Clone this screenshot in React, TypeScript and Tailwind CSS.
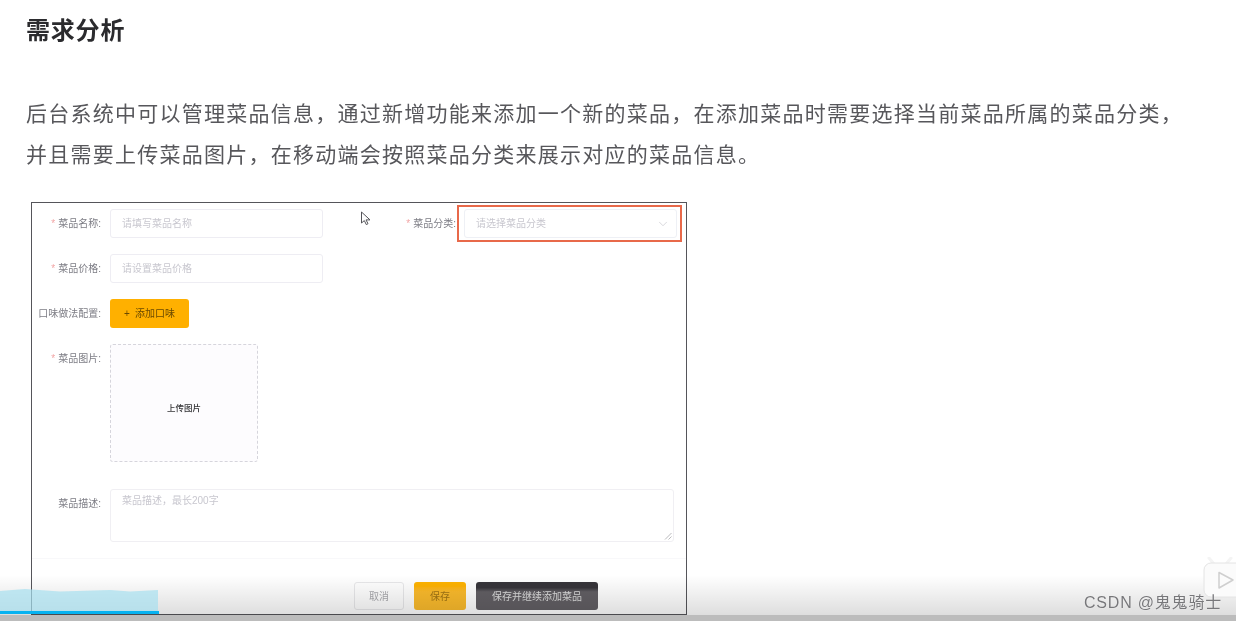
import { ChevronDown } from 'lucide-react';

const cjk = 'font-["Liberation_Sans","Noto_Sans_CJK_SC",sans-serif]';

function Label({ text, required = true, width = 'w-[69px]' }: { text: string; required?: boolean; width?: string }) {
  return (
    <div className={`${width} h-[29px] shrink-0 pt-[1px] text-right text-[10px] leading-[28px] text-[#7d7d85]`}>
      {required && <span className="mr-[3px] text-[#f2a6a6]">*</span>}
      {text}:
    </div>
  );
}

function TextInput({ placeholder }: { placeholder: string }) {
  return (
    <div className="flex h-[29px] w-[213px] items-center rounded-[3px] border border-[#eeedf3] px-[11px] text-[10px] text-[#c8c7cf]">
      {placeholder}
    </div>
  );
}

export default function App() {
  return (
    <div className={`${cjk} relative h-[621px] w-[1236px] overflow-hidden bg-white blur-[0.4px]`}>
      <div className="px-[26px] pt-[16px]">
        <h1 className="text-[24px] font-bold leading-[30px] tracking-[0.8px] text-[#2b2b2e]">需求分析</h1>
        <div className="mt-[47px] text-[21px] leading-[41px] tracking-[1.25px] text-[#57575b]">
          <p>后台系统中可以管理菜品信息，通过新增功能来添加一个新的菜品，在添加菜品时需要选择当前菜品所属的菜品分类，</p>
          <p>并且需要上传菜品图片，在移动端会按照菜品分类来展示对应的菜品信息。</p>
        </div>

        {/* form screenshot */}
        <div className="ml-[5px] mt-[27px] flex h-[413px] w-[656px] flex-col border border-[#55555a]">
          <div className="mt-[6px] flex gap-[9px]">
            <Label text="菜品名称" />
            <TextInput placeholder="请填写菜品名称" />
            <div className="ml-[58px] flex gap-[8px]">
              <Label text="菜品分类" width="w-[66px]" />
              <div className="flex h-[29px] w-[213px] items-center justify-between rounded-[3px] border border-[#eef0f5] pl-[11px] pr-[6px] text-[10px] text-[#c8c7cf]">
                请选择菜品分类
                <ChevronDown size={14} strokeWidth={1.2} className="text-[#c8c8ce]" />
              </div>
            </div>
          </div>

          <div className="mt-[16px] flex gap-[9px]">
            <Label text="菜品价格" />
            <TextInput placeholder="请设置菜品价格" />
          </div>

          <div className="mt-[16px] flex gap-[9px]">
            <Label text="口味做法配置" required={false} />
            <div className="flex h-[29px] w-[79px] items-center justify-center rounded-[3px] bg-[#ffb000] text-[10px] text-[#6b4a00]">
              <span className="mr-[5px]">+</span>添加口味
            </div>
          </div>

          <div className="mt-[16px] flex gap-[9px]">
            <Label text="菜品图片" />
            <div className="flex h-[118px] w-[148px] items-center justify-center rounded-[3px] border border-dashed border-[#d6d5dc] bg-[#fdfcfe] pt-[10px] text-[8.5px] font-medium text-[#333336]">
              上传图片
            </div>
          </div>

          <div className="mt-[27px] flex gap-[9px]">
            <Label text="菜品描述" required={false} />
            <div className="relative h-[53px] w-[564px] rounded-[3px] border border-[#f0eff3] px-[11px] pt-[1px] text-[10px] leading-[20px] text-[#c8c7cf]">
              菜品描述，最长200字
              <svg viewBox="0 0 8 8" className="absolute bottom-[1px] right-[1px] h-[8px] w-[8px] text-[#a8a8ac]" fill="none" stroke="currentColor" strokeWidth="0.8">
                <path d="M1 7.5 7.5 1M4.5 7.5 7.5 4.5" />
              </svg>
            </div>
          </div>

          <div className="mt-[16px] h-px w-full bg-[#f8f8fa]" />

          <div className="ml-[322px] mt-[23px] flex gap-[10px]">
            <div className="flex h-[28px] w-[50px] items-center justify-center rounded-[3px] border border-[#e8e8ea] text-[10px] text-[#a9a9ad]">取消</div>
            <div className="flex h-[28px] w-[52px] items-center justify-center rounded-[3px] bg-gradient-to-b from-[#ffb300] from-15% to-[#fbbb2c] to-35% text-[10px] text-[#a07414]">保存</div>
            <div className="flex h-[28px] w-[122px] items-center justify-center rounded-[3px] bg-gradient-to-b from-[#37353a] from-20% to-[#625f64] to-35% text-[10px] text-[#dcdcdc]">保存并继续添加菜品</div>
          </div>
        </div>
      </div>

      {/* highlight box round the category select */}
      <div className="absolute left-[457px] top-[205px] h-[37px] w-[225px] border-2 border-[#e8694a]" />

      {/* mouse cursor */}
      <svg viewBox="0 0 12 16" className="absolute left-[360px] top-[211px] h-[16px] w-[12px]" fill="#fff" stroke="#55555a" strokeWidth="1">
        <path d="M1.5 1v11l2.8-2.4 2 4 1.7-.9-2-3.8H10z" />
      </svg>

      {/* video player fade at the bottom */}
      <div className="absolute inset-x-0 bottom-0 h-[46px] bg-gradient-to-b from-transparent to-black/15" />
      <div className="absolute inset-x-0 bottom-0 h-[6px] bg-[#bcbcbc]" />

      {/* buffered wave + progress bar */}
      <svg viewBox="0 0 158 22" preserveAspectRatio="none" className="absolute bottom-[10px] left-0 h-[22px] w-[158px]">
        <path d="M0 2 25 0 60 2.500 110 1 130 2.500 158 1V22H0z" fill="#a6dff0" fillOpacity="0.7" />
      </svg>
      <div className="absolute bottom-[7px] left-0 h-[3px] w-[159px] bg-[#08b2f0]" />

      {/* bilibili tv icon */}
      <svg viewBox="0 0 34 42" className="absolute left-[1203px] top-[557px] h-[42px] w-[34px]">
        <path d="M11 7 6 1M23 7l5-6" stroke="#f4f4f4" strokeWidth="3" strokeLinecap="round" />
        <rect x="1" y="6" width="40" height="34" rx="7" fill="#fbfbfb" stroke="#e4e4e4" />
        <path d="M16 15.500 30 23 16 31z" fill="#fbfbfb" stroke="#cfcfcf" strokeWidth="1.500" strokeLinejoin="round" />
      </svg>

      <div className="absolute left-[1084px] top-[593px] text-[16px] leading-[20px] tracking-[0.8px] text-[#77777a] [text-shadow:0_0_1px_#fff]">
        CSDN @鬼鬼骑士
      </div>
    </div>
  );
}
